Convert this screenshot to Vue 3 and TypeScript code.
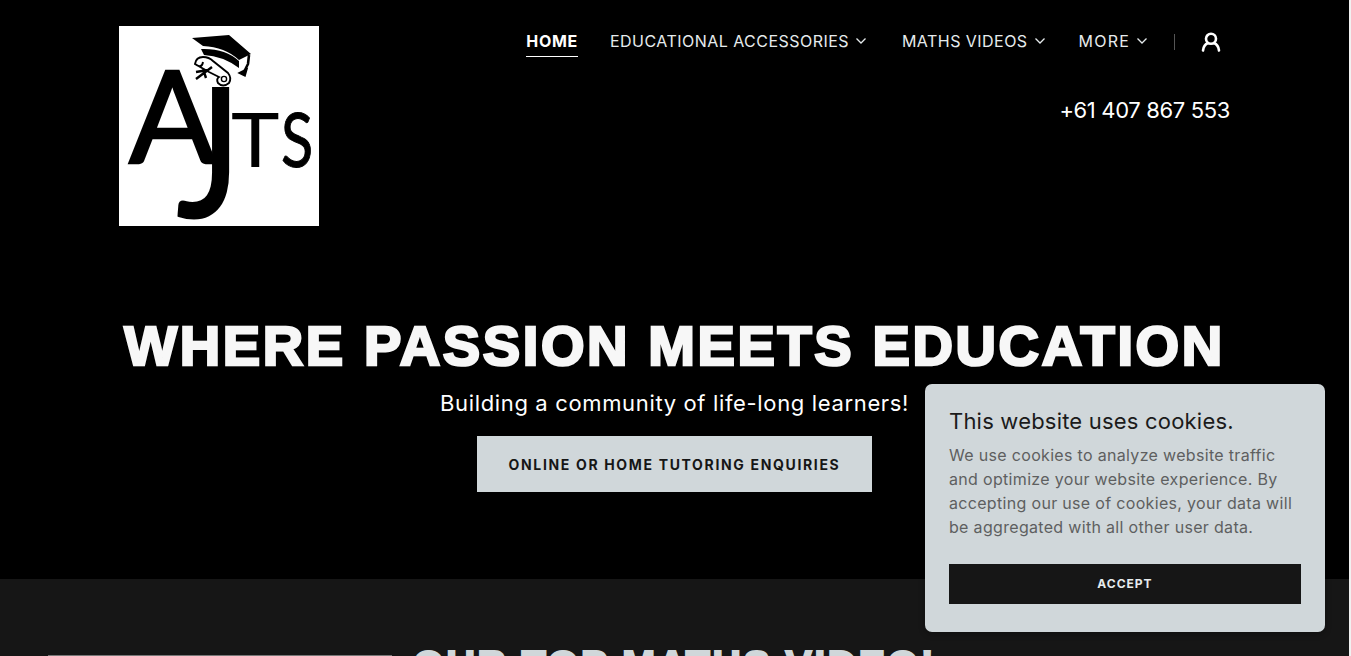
<script setup lang="ts">
const navItems: { label: string; active?: boolean; caret?: boolean }[] = [
  { label: 'HOME', active: true },
  { label: 'EDUCATIONAL ACCESSORIES', caret: true },
  { label: 'MATHS VIDEOS', caret: true },
  { label: 'MORE', caret: true },
]
</script>

<template>
  <div class="page">
    <section class="top">
      <header class="head">
        <a class="logo" href="#" aria-label="AJTS">
          <svg viewBox="0 0 200 200" width="200" height="200">
            <rect width="200" height="200" fill="#fff" />
            <path d="M73 12 L110 9 L132 28 L120 34 Q106 21 84 20 Z" fill="#000" />
            <path d="M82 23 Q106 22 120 35 L120 42 Q104 30 85 29 Z" fill="#000" />
            <path d="M130 29 L129 38 L125 46" stroke="#000" stroke-width="2.6" fill="none" />
            <path d="M120 47 L128 43 L126 50 Z" fill="#000" stroke="#000" stroke-width="1.5" />
            <path d="M76 38 Q77 31 84 31 Q90 31 94 35 L109 47 Q113 52 110 57 Q104 62 99 57 Q97 53 100 51 L90 46 Z M76 38 Q83 43 84 36"
              fill="#fff" stroke="#000" stroke-width="1.9" />
            <circle cx="105" cy="53" r="2.6" fill="none" stroke="#000" stroke-width="1.4" />
            <path d="M77 53 L93 41 M77 46 L89 44 M84 43 L87 52" stroke="#000" stroke-width="2.4" fill="none" />
            <text class="lg lg-a" x="10" y="137">A</text>
            <text class="lg lg-j" transform="translate(58 191) scale(.84 1)">J</text>
            <text class="lg lg-t" transform="translate(112 141) scale(1.08 1)">T</text>
            <text class="lg lg-s" transform="translate(162 141) scale(.78 1)">S</text>
          </svg>
        </a>
        <div class="head-right">
          <nav class="nav">
            <a v-for="item in navItems" :key="item.label" href="#" class="nav-link" :class="{ active: item.active }">
              <span class="nav-text">{{ item.label }}</span>
              <svg v-if="item.caret" class="caret" viewBox="0 0 12 8" width="12" height="8">
                <path d="M1.5 1.5 L6 6 L10.5 1.5" fill="none" stroke="currentColor" stroke-width="1.3" />
              </svg>
            </a>
            <span class="sep"></span>
            <svg class="user" viewBox="0 0 20 20" width="20" height="20">
              <circle cx="10" cy="6.8" r="5" fill="none" stroke="#fff" stroke-width="2.6" />
              <path d="M2 18.5 C2.4 14.5 4.6 12 7 11 M18 18.5 C17.6 14.5 15.4 12 13 11" fill="none" stroke="#fff" stroke-width="2.6" stroke-linecap="round" />
            </svg>
          </nav>
          <div class="phone">+61 407 867 553</div>
        </div>
      </header>
      <div class="hero">
        <h1 class="hero-title">WHERE PASSION MEETS EDUCATION</h1>
        <p class="hero-sub">Building a community of life-long learners!</p>
        <a href="#" class="cta">ONLINE OR HOME TUTORING ENQUIRIES</a>
      </div>
    </section>
    <section class="videos">
      <div class="rule"></div>
      <h2 class="videos-title">OUR TOP MATHS VIDEO!</h2>
    </section>
    <aside class="cookie">
      <h4 class="cookie-title">This website uses cookies.</h4>
      <p class="cookie-text">We use cookies to analyze website traffic and optimize your website experience. By accepting our use of cookies, your data will be aggregated with all other user data.</p>
      <a href="#" class="accept">ACCEPT</a>
    </aside>
  </div>
</template>

<style>
html, body { margin: 0; background: #f1f1f1; overflow: hidden; }
</style>

<style scoped>
.page {
  position: relative;
  width: 1349px;
  height: 656px;
  overflow: hidden;
  font-family: "Inter", "Liberation Sans", sans-serif;
  color: #fff;
}
.top { height: 579px; background: #000; box-sizing: border-box; padding-top: 26px; }
.head { display: flex; justify-content: space-between; margin: 0 119px; }
.logo { display: block; width: 200px; height: 200px; }
.logo svg { display: block; }
.lg { font-family: "Lato", sans-serif; fill: #000; stroke: #000; }
.lg-a { font-size: 128px; stroke-width: 2.4px; }
.lg-j { font-size: 179px; stroke-width: 3px; }
.lg-t { font-size: 76px; stroke-width: 0; }
.lg-s { font-size: 76px; stroke-width: 1px; }
.head-right { display: flex; flex-direction: column; align-items: flex-end; }
.nav { display: flex; align-items: center; height: 31px; margin-right: 9px; }
.nav-link {
  display: flex; align-items: center; gap: 6px;
  color: #e6ebed; text-decoration: none;
  font-size: 16px; letter-spacing: 0.46px;
  margin-right: 34px; height: 31px;
  box-sizing: border-box; border-bottom: 1px solid transparent;
}
.nav-link:nth-of-type(2) { margin-right: 35px; }
.nav-link:nth-of-type(3) { margin-right: 33px; }
.nav-link:nth-of-type(4) { margin-right: 26px; letter-spacing: 1.2px; }
.nav-link.active { font-weight: 700; color: #fff; border-bottom-color: #fff; margin-right: 32px; letter-spacing: 0.7px; }
.sep { width: 1px; height: 16px; background: #555; margin-right: 26px; }
.user { display: block; }
.phone { margin-top: 37px; font-size: 22px; line-height: 32px; color: #fff; letter-spacing: -0.35px; }
.hero { display: flex; flex-direction: column; align-items: center; margin: 89px 0 0; }
.hero-title {
  margin: 0; font-family: "Liberation Sans", sans-serif; font-weight: 700;
  font-size: 56px; line-height: 62px; letter-spacing: 2.62px; color: #f7f7f7;
  -webkit-text-stroke: 2.6px #f7f7f7;
}
.hero-sub { margin: 10px 0 0; font-size: 22px; line-height: 32px; color: #fff; letter-spacing: 0.65px; }
.cta {
  margin-top: 17px; width: 395px; height: 56px; display: flex; align-items: center; justify-content: center;
  background: #d0d7da; color: #161616; text-decoration: none;
  font-size: 14px; font-weight: 700; letter-spacing: 1.66px;
}
.videos { position: relative; height: 77px; background: #161616; }
.rule { position: absolute; left: 48px; top: 76px; width: 344px; height: 1px; background: #777; }
.videos-title {
  position: absolute; left: 0; right: 0; top: 62px; margin: 0; text-align: center;
  font-family: "Liberation Sans", sans-serif; font-weight: 700; font-size: 40px; line-height: 48px;
  letter-spacing: 2.15px; color: #d0d7da; -webkit-text-stroke: 1.8px #d0d7da;
}
.cookie {
  position: absolute; left: 925px; top: 384px; width: 400px; height: 248px;
  box-sizing: border-box; padding: 24px; background: #d0d7da; border-radius: 7px;
  box-shadow: 0 2px 6px rgba(0,0,0,.3);
}
.cookie-title { margin: -1px 0 0; font-size: 22px; font-weight: 400; line-height: 28px; color: #1b1b1b; letter-spacing: 0.2px; }
.cookie-text { margin: 8px 0 0; font-size: 16px; line-height: 24px; color: #5e5f60; letter-spacing: 0.32px; }
.accept {
  display: flex; align-items: center; justify-content: center; margin-top: 25px; height: 40px; padding-bottom: 2px; box-sizing: border-box;
  background: #161616; color: #e6ebed; text-decoration: none; font-size: 12px; font-weight: 700; letter-spacing: 1px;
}
</style>
